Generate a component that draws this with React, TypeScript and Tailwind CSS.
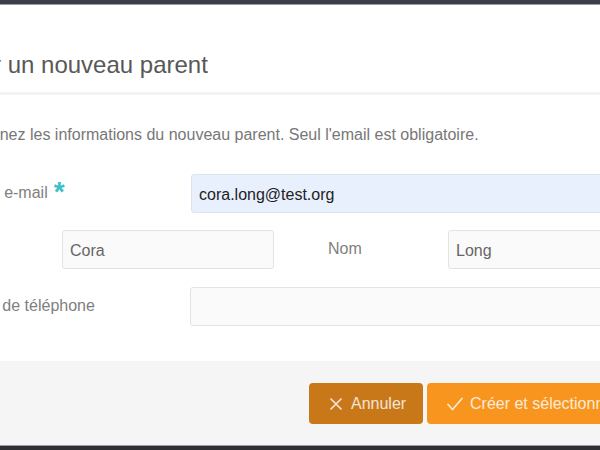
const font = { fontFamily: '"Liberation Sans", Arial, Helvetica, sans-serif' };

function Label({ children, required }: { children: React.ReactNode; required?: boolean }) {
  return (
    <label className="block pt-[7px] text-[16px] leading-[24px] text-[#808080] whitespace-nowrap">
      {children}
      {required && (
        <span className="ml-[6px] inline-block align-top text-[28px] leading-[22px] font-bold text-[#3ebfc6]">
          *
        </span>
      )}
    </label>
  );
}

function Field({ value, autofill }: { value?: string; autofill?: boolean }) {
  return (
    <input
      readOnly
      value={value ?? ""}
      className={`block h-[39px] w-full rounded-[3px] border pt-[2px] pl-[7px] text-[16px] outline-none ${
        autofill
          ? "border-[#dde3ec] bg-[#e8f0fe] text-[#222]"
          : "border-[#e3e3e3] bg-[#fafafa] text-[#666]"
      }`}
      style={font}
    />
  );
}

export default function App() {
  return (
    <div className="flex h-[450px] w-[600px] flex-col overflow-hidden bg-[#2f3035]" style={font}>
      <div className="h-[4px] shrink-0 bg-[#3b3e47]" />
      <div className="ml-[-74px] w-[749px] shrink-0 border-y border-[#9a9ca2] bg-white">
        <div className="border-b-[3px] border-[#f3f3f3] px-[15px] pt-[47px] pb-[14px]">
          <h4 className="text-[24px] leading-[26px] text-[#585858] whitespace-nowrap">
            Créer un nouveau parent
          </h4>
        </div>

        <div className="px-[15px] pt-[28px] pb-[35px]">
          <p className="text-[16px] leading-[24px] text-[#777] whitespace-nowrap">
            Renseignez les informations du nouveau parent. Seul l'email est obligatoire.
          </p>

          <div className="mt-[27px] grid grid-cols-[250px_1fr]">
            <Label required>Adresse e-mail</Label>
            <Field value="cora.long@test.org" autofill />
          </div>

          <div className="mt-[17px] grid grid-cols-[121px_212px_54px_120px_212px]">
            <Label>Prénom</Label>
            <Field value="Cora" />
            <div />
            <Label>Nom</Label>
            <Field value="Long" />
          </div>

          <div className="mt-[18px] grid grid-cols-[249px_1fr]">
            <Label>Numéro de téléphone</Label>
            <Field />
          </div>
        </div>

        <div className="flex justify-end gap-[4px] bg-[#f5f5f5] px-[15px] pt-[22px] pb-[21px]">
          <button className="flex h-[41px] w-[114px] items-center gap-[9px] rounded-[4px] bg-[#c87819] pl-[21px] text-[16px] text-white/80">
            <svg width="12" height="12" viewBox="0 0 12 12" fill="none">
              <path d="M1 1l10 10M11 1 1 11" stroke="currentColor" strokeWidth="1.7" strokeLinecap="round" />
            </svg>
            Annuler
          </button>
          <button className="flex h-[41px] w-[233px] items-center gap-[7px] rounded-[4px] bg-[#f7951e] pl-[20px] text-[16px] text-white/80 whitespace-nowrap">
            <svg width="16" height="14" viewBox="0 0 16 14" fill="none">
              <path d="M1 7.5 5.5 12.5 15 1.5" stroke="currentColor" strokeWidth="1.7" strokeLinecap="round" strokeLinejoin="round" />
            </svg>
            Créer et sélectionner
          </button>
        </div>
      </div>
    </div>
  );
}
